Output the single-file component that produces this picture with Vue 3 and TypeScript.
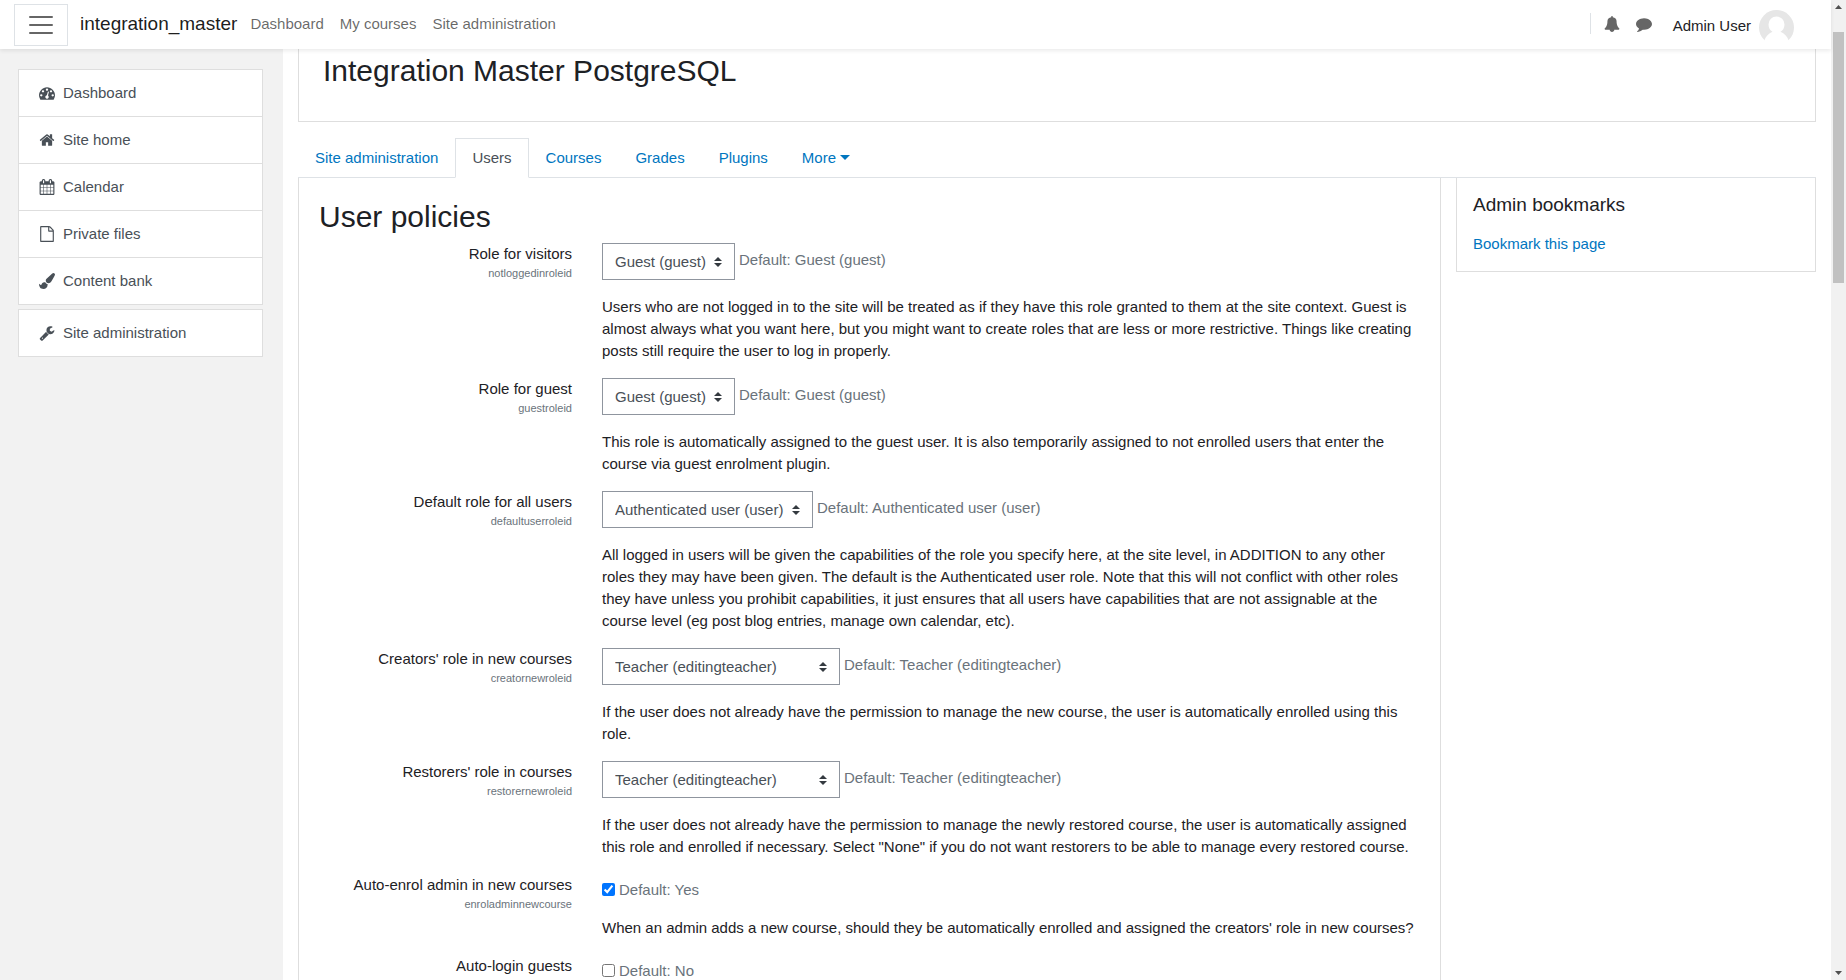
<script setup lang="ts">
import { ref } from 'vue'

interface NavItem { label: string; icon: string }
interface Setting {
  id: string
  label: string
  shortname?: string
  kind: 'select' | 'checkbox'
  options?: string[]
  value: string | boolean
  fallback: string
  description?: string
}

const topLinks: string[] = ['Dashboard', 'My courses', 'Site administration']
const tabs: string[] = ['Site administration', 'Users', 'Courses', 'Grades', 'Plugins']

const icons: Record<string, string> = {
  bell: 'M1728 1408q0 52-38 90t-90 38h-448q0 106-75 181t-181 75-181-75-75-181h-448q-52 0-90-38t-38-90q50-42 91-88t85-119.500 74.500-158.500 50-206 19.500-260q0-152 117-282.500t307-158.500q-8-19-8-39 0-40 28-68t68-28 68 28 28 68q0 20-8 39 190 28 307 158.500t117 282.500q0 139 19.500 260t50 206 74.500 158.500 85 119.500 91 88z',
  comment: 'M1792 896q0 174-120 321.500t-326 233-450 85.500q-70 0-145-8-198 175-460 242-49 14-114 22-17 2-30.500-9t-17.500-29v-1q-3-4-.5-12t2-10 4.500-9.500l6-9 7-8.500 8-9q7-8 31-34.500t34.500-38 31-39.500 32.500-51 27-59 26-76q-157-89-247.500-220t-90.500-281q0-130 71-248.500t191-204.500 286-136.500 348-50.500q244 0 450 85.500t326 233 120 321.500z',
  dashboard: 'M384 1152q0-53-37.500-90.500t-90.500-37.500-90.500 37.500-37.500 90.500 37.500 90.500 90.500 37.500 90.500-37.500 37.500-90.500zm192-448q0-53-37.500-90.500t-90.500-37.500-90.500 37.500-37.500 90.500 37.500 90.500 90.500 37.500 90.500-37.500 37.500-90.500zm428 481l101-382q6-26-7.500-48.500t-38.500-29.500-48 6.500-30 39.500l-101 382q-60 5-107 43.500t-63 98.500q-20 77 20 146t117 89 146-20 89-117q16-60-6-117t-72-91zm660-33q0-53-37.500-90.500t-90.500-37.500-90.500 37.500-37.500 90.500 37.500 90.500 90.500 37.500 90.500-37.500 37.500-90.500zm-640-640q0-53-37.500-90.500t-90.500-37.500-90.500 37.500-37.500 90.500 37.500 90.500 90.500 37.500 90.500-37.500 37.500-90.500zm448 192q0-53-37.500-90.500t-90.500-37.500-90.500 37.500-37.500 90.500 37.500 90.500 90.500 37.500 90.500-37.500 37.500-90.500zm320 448q0 261-141 483-19 29-54 29h-1402q-35 0-54-29-141-221-141-483 0-182 71-348t191-286 286-191 348-71 348 71 286 191 191 286 71 348z',
  home: 'M1472 992v480q0 26-19 45t-45 19h-384v-384h-256v384h-384q-26 0-45-19t-19-45v-480q0-1 .5-3t.5-3l575-474 575 474q1 2 1 6zm223-69l-62 74q-8 9-21 11h-3q-13 0-21-7l-692-577-692 577q-12 8-24 7-13-2-21-11l-62-74q-8-10-7-23.500t11-21.500l719-599q32-26 76-26t76 26l244 204v-195q0-14 9-23t23-9h192q14 0 23 9t9 23v408l219 182q10 8 11 21.500t-7 23.500z',
  calendar: 'M192 1664h288v-288h-288v288zm352 0h320v-288h-320v288zm-352-352h288v-320h-288v320zm352 0h320v-320h-320v320zm-352-384h288v-288h-288v288zm736 736h320v-288h-320v288zm-384-736h320v-288h-320v288zm768 736h288v-288h-288v288zm-384-352h320v-320h-320v320zm-352-864v-288q0-13-9.500-22.500t-22.500-9.500h-64q-13 0-22.500 9.500t-9.500 22.500v288q0 13 9.500 22.500t22.500 9.500h64q13 0 22.500-9.500t9.500-22.500zm736 864h288v-320h-288v320zm-384-384h320v-288h-320v288zm384 0h288v-288h-288v288zm32-480v-288q0-13-9.500-22.500t-22.500-9.500h-64q-13 0-22.500 9.500t-9.500 22.500v288q0 13 9.500 22.500t22.500 9.500h64q13 0 22.500-9.500t9.500-22.500zm384-64v1280q0 52-38 90t-90 38h-1408q-52 0-90-38t-38-90v-1280q0-52 38-90t90-38h128v-96q0-66 47-113t113-47h64q66 0 113 47t47 113v96h384v-96q0-66 47-113t113-47h64q66 0 113 47t47 113v96h128q52 0 90 38t38 90z',
  file: 'M1596 380q28 28 48 76t20 88v1152q0 40-28 68t-68 28h-1344q-40 0-68-28t-28-68v-1600q0-40 28-68t68-28h896q40 0 88 20t76 48zm-444-244v376h376q-10-29-22-41l-313-313q-12-12-41-22zm384 1528v-1024h-416q-40 0-68-28t-28-68v-416h-768v1536h1280z',
  brush: 'M1615 0q70 0 122.500 46.500t52.500 116.500q0 63-45 151-332 629-465 752-97 91-218 91-126 0-216.500-92.500t-90.500-219.500q0-128 92-212l638-579q59-54 130-54zm-909 1034q39 76 106.500 130t150.500 76l1 71q4 213-129.500 347t-348.500 134q-123 0-218-46.500t-152.500-127.500-86.500-183-29-220q7 5 41 30t62 44.500 59 36.500 46 17q41 0 55-37 25-66 57.500-112.500t69.500-76 88-47.500 103-25.500 125-10.500z',
  wrench: 'M448 1472q0-26-19-45t-45-19-45 19-19 45 19 45 45 19 45-19 19-45zm644-420l-682 682q-37 37-90 37-52 0-91-37l-106-108q-38-36-38-90 0-53 38-91l681-681q39 98 114.500 173.500t173.500 114.500zm634-435q0 39-23 106-47 134-164.500 217.500t-258.500 83.500q-185 0-316.500-131.500t-131.500-316.500 131.500-316.500 316.500-131.500q58 0 121.500 16.500t107.500 46.500q16 11 16 28t-16 28l-293 169v224l193 107q5-3 79-48.500t135.500-81 70.500-35.500q15 0 23.500 10t8.500 25z',
}

const drawerGroups: NavItem[][] = [
  [
    { label: 'Dashboard', icon: 'dashboard' },
    { label: 'Site home', icon: 'home' },
    { label: 'Calendar', icon: 'calendar' },
    { label: 'Private files', icon: 'file' },
    { label: 'Content bank', icon: 'brush' },
  ],
  [{ label: 'Site administration', icon: 'wrench' }],
]

const teacherRoles = ['Teacher (editingteacher)', 'Non-editing teacher (teacher)']

const settings = ref<Setting[]>([
  {
    id: 'visitor-role', label: 'Role for visitors', shortname: 'notloggedinroleid', kind: 'select',
    options: ['Guest (guest)'], value: 'Guest (guest)', fallback: 'Guest (guest)',
    description: 'Users who are not logged in to the site will be treated as if they have this role granted to them at the site context. Guest is almost always what you want here, but you might want to create roles that are less or more restrictive. Things like creating posts still require the user to log in properly.',
  },
  {
    id: 'guest-role', label: 'Role for guest', shortname: 'guestroleid', kind: 'select',
    options: ['Guest (guest)'], value: 'Guest (guest)', fallback: 'Guest (guest)',
    description: 'This role is automatically assigned to the guest user. It is also temporarily assigned to not enrolled users that enter the course via guest enrolment plugin.',
  },
  {
    id: 'default-role', label: 'Default role for all users', shortname: 'defaultuserroleid', kind: 'select',
    options: ['Authenticated user (user)'], value: 'Authenticated user (user)', fallback: 'Authenticated user (user)',
    description: 'All logged in users will be given the capabilities of the role you specify here, at the site level, in ADDITION to any other roles they may have been given. The default is the Authenticated user role. Note that this will not conflict with other roles they have unless you prohibit capabilities, it just ensures that all users have capabilities that are not assignable at the course level (eg post blog entries, manage own calendar, etc).',
  },
  {
    id: 'creator-role', label: "Creators' role in new courses", shortname: 'creatornewroleid', kind: 'select',
    options: teacherRoles, value: teacherRoles[0], fallback: teacherRoles[0],
    description: 'If the user does not already have the permission to manage the new course, the user is automatically enrolled using this role.',
  },
  {
    id: 'restorer-role', label: "Restorers' role in courses", shortname: 'restorernewroleid', kind: 'select',
    options: teacherRoles, value: teacherRoles[0], fallback: teacherRoles[0],
    description: 'If the user does not already have the permission to manage the newly restored course, the user is automatically assigned this role and enrolled if necessary. Select "None" if you do not want restorers to be able to manage every restored course.',
  },
  {
    id: 'enrol-admin', label: 'Auto-enrol admin in new courses', shortname: 'enroladminnewcourse', kind: 'checkbox',
    value: true, fallback: 'Yes',
    description: "When an admin adds a new course, should they be automatically enrolled and assigned the creators' role in new courses?",
  },
  {
    id: 'auto-login', label: 'Auto-login guests', kind: 'checkbox',
    value: false, fallback: 'No',
  },
])
</script>

<template>
  <div class="page">
    <header class="navbar">
      <button class="toggler" type="button" aria-label="Side panel">
        <svg width="30" height="30" viewBox="0 0 30 30" fill="none" stroke="#666" stroke-width="2" stroke-linecap="round">
          <path d="M4 7h22M4 15h22M4 23h22" />
        </svg>
      </button>
      <a class="brand" href="#">integration_master</a>
      <nav class="top-links">
        <a v-for="link in topLinks" :key="link" href="#">{{ link }}</a>
      </nav>
      <div class="user-tools">
        <span class="divider"></span>
        <button class="tool" type="button" aria-label="Notifications">
          <svg class="icon" viewBox="0 0 1792 1792"><path :d="icons.bell" /></svg>
        </button>
        <button class="tool" type="button" aria-label="Messages">
          <svg class="icon" viewBox="0 0 1792 1792"><path :d="icons.comment" /></svg>
        </button>
        <a class="user" href="#">
          <span>Admin User</span>
          <svg class="avatar" viewBox="0 0 35 35">
            <circle cx="17.500" cy="17.500" r="17.500" fill="#e6e6e6" />
            <path d="M17.500 6.500a8 8 0 0 0-8 8c0 3.300 1.600 6 4 7.200-4 1.500-6.700 4.800-8 8.300V35h24v-5c-1.300-3.500-4-6.800-8-8.300 2.400-1.200 4-3.900 4-7.200a8 8 0 0 0-8-8z" fill="#fff" />
          </svg>
        </a>
      </div>
    </header>

    <aside class="drawer">
      <nav v-for="(group, i) in drawerGroups" :key="i" class="drawer-group">
        <a v-for="item in group" :key="item.label" href="#">
          <svg class="icon" viewBox="0 0 1792 1792"><path :d="icons[item.icon]" /></svg>
          <span>{{ item.label }}</span>
        </a>
      </nav>
    </aside>

    <main class="content">
      <div class="page-header"><h1>Integration Master PostgreSQL</h1></div>
      <nav class="tabs">
        <a v-for="tab in tabs" :key="tab" href="#" :class="{ active: tab === 'Users' }">{{ tab }}</a>
        <a href="#" class="more">More</a>
      </nav>
      <div class="columns">
        <section class="region">
          <h2>User policies</h2>
          <form>
            <div v-for="s in settings" :key="s.id" class="setting">
              <div class="setting-label">
                <label :for="s.id">{{ s.label }}</label>
                <small v-if="s.shortname">{{ s.shortname }}</small>
              </div>
              <div class="setting-body">
                <div :class="['control', s.kind]">
                  <select v-if="s.kind === 'select'" :id="s.id" v-model="s.value">
                    <option v-for="o in s.options" :key="o">{{ o }}</option>
                  </select>
                  <input v-else :id="s.id" v-model="s.value" type="checkbox" />
                  <span class="default">Default: {{ s.fallback }}</span>
                </div>
                <p v-if="s.description">{{ s.description }}</p>
              </div>
            </div>
          </form>
        </section>
        <aside class="block">
          <h3>Admin bookmarks</h3>
          <a href="#">Bookmark this page</a>
        </aside>
      </div>
    </main>

    <div class="scrollbar" aria-hidden="true">
      <svg width="7" height="4" viewBox="0 0 7 4"><path d="M0 4L3.500 0L7 4z" fill="#505050" /></svg>
      <div class="track"><div class="thumb"></div></div>
      <svg width="7" height="4" viewBox="0 0 7 4"><path d="M0 0L3.500 4L7 0z" fill="#505050" /></svg>
    </div>
  </div>
</template>

<style>
html,
body {
  margin: 0;
  height: 100%;
  overflow: hidden;
}
#app {
  height: 100%;
}
</style>

<style scoped>
.page {
  display: grid;
  grid-template: 49px minmax(0, 1fr) / 283px minmax(0, 1fr) 15px;
  height: 100vh;
  overflow: hidden;
  background: #fff;
  color: #1d2125;
  font: 15px/22px "Liberation Sans", Arial, sans-serif;
}
*,
*::before,
*::after {
  box-sizing: border-box;
}
a {
  color: #0076bf;
  text-decoration: none;
}
h1,
h2,
h3,
p {
  margin: 0;
  font-weight: 400;
}
.icon {
  width: 16px;
  height: 16px;
  fill: currentColor;
  flex: none;
}

.navbar {
  grid-column: 1 / 3;
  z-index: 2;
  display: flex;
  align-items: center;
  padding: 0 37px 0 14px;
  background: #fff;
  box-shadow: 0 2px 4px rgba(0, 0, 0, 0.08);
}
.toggler {
  display: flex;
  align-items: center;
  justify-content: center;
  width: 54px;
  height: 42px;
  padding: 0;
  border: 1px solid #dee2e6;
  background: none;
}
.brand {
  margin-left: 12px;
  padding-bottom: 2px;
  color: rgba(0, 0, 0, 0.9);
  font-size: 19px;
}
.top-links {
  display: flex;
  gap: 16px;
  margin-left: 13px;
  padding-bottom: 2px;
}
.top-links a {
  color: rgba(0, 0, 0, 0.6);
}
.user-tools {
  display: flex;
  align-items: center;
  margin-left: auto;
  padding-bottom: 2px;
}
.divider {
  width: 1px;
  height: 21px;
  background: #dee2e6;
}
.tool {
  display: flex;
  width: 32px;
  padding: 8px;
  margin-left: 5px;
  border: 0;
  background: none;
  color: #666;
}
.tool + .tool {
  margin-left: 0;
}
.user {
  display: flex;
  align-items: center;
  gap: 8px;
  margin: 8px 0 0 13px;
  color: #1d2125;
}
.user span {
  padding-bottom: 4px;
}
.avatar {
  width: 35px;
  height: 35px;
}

.drawer {
  display: flex;
  flex-direction: column;
  gap: 4px;
  padding: 20px 20px 0 18px;
  background: #f2f2f2;
}
.drawer-group {
  border: 1px solid #dedede;
  background: #fff;
}
.drawer-group a {
  display: flex;
  align-items: center;
  gap: 8px;
  padding: 12px 20px;
  color: #495057;
}
.drawer-group a + a {
  border-top: 1px solid #dedede;
}

.content {
  display: flex;
  flex-direction: column;
  min-height: 0;
  overflow: hidden;
  padding: 0 15px;
}
.page-header {
  padding: 4px 24px 32px;
  border: 1px solid #dedede;
  border-top: 0;
}
h1,
h2 {
  font-size: 30px;
  line-height: 36px;
}
.tabs {
  display: flex;
  margin-top: 16px;
  border-bottom: 1px solid #dee2e6;
}
.tabs a {
  padding: 8px 16px;
  margin-bottom: -1px;
  border: 1px solid transparent;
}
.tabs .active {
  border-color: #dee2e6 #dee2e6 #fff;
  color: #495057;
}
.more::after {
  content: "";
  display: inline-block;
  margin-left: 4px;
  vertical-align: 3px;
  border-top: 5px solid;
  border-right: 5px solid transparent;
  border-left: 5px solid transparent;
}
.columns {
  flex: 1;
  display: grid;
  grid-template-columns: minmax(0, 1fr) 360px;
  gap: 15px;
}
.region {
  padding: 21px 20px 0;
  border: solid #dedede;
  border-width: 0 1px;
}
.block {
  align-self: start;
  padding: 16px;
  border: 1px solid #dedede;
  border-top: 0;
}
h3 {
  margin-bottom: 17px;
  font-size: 19px;
  line-height: 22px;
}
form {
  margin-top: 8px;
}
.setting {
  display: grid;
  grid-template-columns: minmax(0, 253px) minmax(0, 1fr);
  gap: 30px;
  margin-bottom: 16px;
}
.setting-label {
  display: flex;
  flex-direction: column;
  text-align: right;
}
small {
  color: #6a737b;
  font-size: 11px;
  line-height: 16px;
}
.control {
  display: flex;
  align-items: center;
  gap: 4px;
}
.control.select {
  margin-bottom: 16px;
}
.control.checkbox {
  height: 30px;
  margin-bottom: 13px;
}
select {
  appearance: none;
  height: 37px;
  padding: 0 28px 0 12px;
  border: 1px solid #8f959e;
  border-radius: 0;
  background: #fff url("data:image/svg+xml,%3csvg xmlns='http://www.w3.org/2000/svg' viewBox='0 0 4 5'%3e%3cpath fill='%23343a40' d='M2 0L0 2h4zm0 5L0 3h4z'/%3e%3c/svg%3e") no-repeat right 12px center / 8px 10px;
  color: #495057;
  font: inherit;
}
input {
  width: 13px;
  height: 13px;
  margin: 0;
}
.default {
  color: #6a737b;
}
.select .default {
  padding-bottom: 4px;
}
.checkbox .default {
  padding-top: 2px;
}

.scrollbar {
  grid-area: 1 / 3 / 3 / 4;
  display: flex;
  flex-direction: column;
  align-items: center;
  gap: 23px;
  padding: 5px 0;
  background: #f1f1f1;
}
.scrollbar svg {
  flex: none;
}
.track {
  flex: 1;
  width: 11px;
}
.thumb {
  height: 27.4%;
  background: #c1c1c1;
}
</style>
